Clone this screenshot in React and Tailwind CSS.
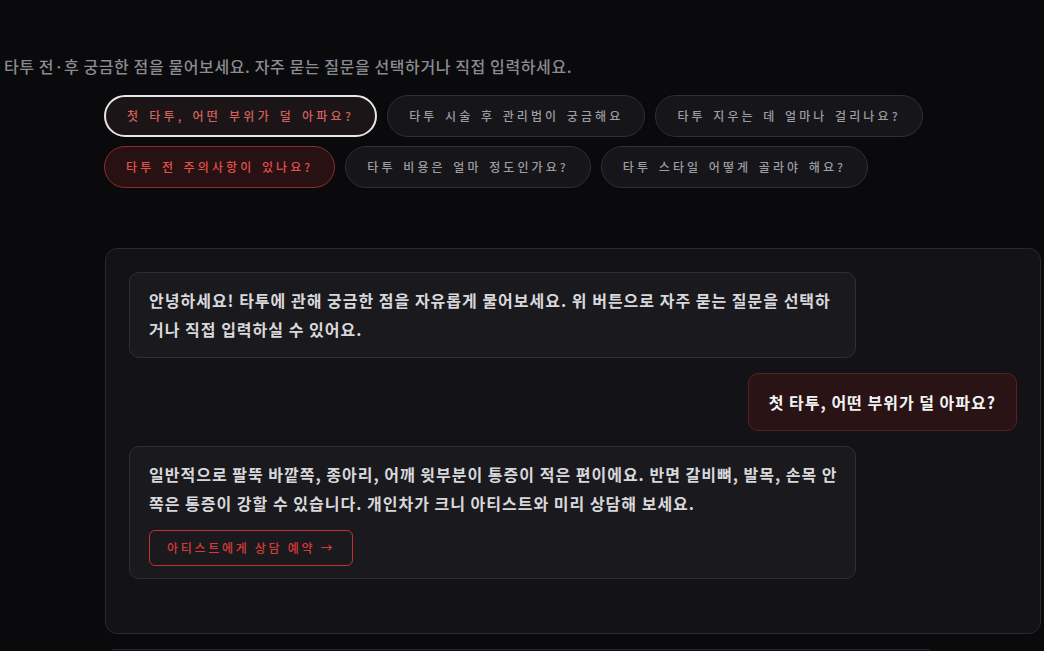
import React from "react";

const chips = [
  { t: "첫 타투, 어떤 부위가 덜 아파요?", k: "sel" },
  { t: "타투 시술 후 관리법이 궁금해요", k: "n" },
  { t: "타투 지우는 데 얼마나 걸리나요?", k: "n" },
  { t: "타투 전 주의사항이 있나요?", k: "act" },
  { t: "타투 비용은 얼마 정도인가요?", k: "n" },
  { t: "타투 스타일 어떻게 골라야 해요?", k: "n" },
];

const chipCls = {
  n: "border border-[#2f2f34] bg-[#16161a] text-[#9c9ca2] tracking-[3.1px]",
  sel: "border-2 border-[#e6e6e6] bg-[#1b1517] text-[#d2625c] tracking-[3.3px]",
  act: "border border-[#8e2b2b] bg-[#281113] text-[#e0524d] tracking-[3.1px]",
};

export default function App() {
  return (
    <div
      className="min-h-screen bg-[#0a0a0d] overflow-hidden"
      style={{ fontFamily: '"Noto Sans CJK KR", "Noto Sans", sans-serif' }}
    >
      <p className="pt-[54px] pl-1 text-[16px] leading-6 font-medium tracking-[0.6px] text-[#8b8b90]">
        타투 전·후 궁금한 점을 물어보세요. 자주 묻는 질문을 선택하거나 직접 입력하세요.
      </p>

      <div className="ml-[104px] mr-1 mt-[17px] flex flex-wrap gap-x-[10px] gap-y-[9px]">
        {chips.map((c) => (
          <button
            key={c.t}
            className={`h-[42px] rounded-full px-[21px] text-[12px] font-medium [word-spacing:1.8px] whitespace-nowrap flex items-center ${chipCls[c.k]}`}
          >
            {c.t}
          </button>
        ))}
      </div>

      <div className="ml-[105px] mr-[3px] mt-[60px] h-[386px] rounded-xl border border-[#29292e] bg-[#131317] p-[23px] flex flex-col gap-[15px]">
        <div className="self-start max-w-[727px] rounded-[10px] border border-[#2e2e33] bg-[#1a1a1e] px-[19px] py-[13px] text-[16px] leading-[29px] font-semibold tracking-[1px] text-[#d8d8dc]">
          안녕하세요! 타투에 관해 궁금한 점을 자유롭게 물어보세요. 위 버튼으로 자주 묻는 질문을 선택하거나 직접 입력하실 수 있어요.
        </div>

        <div className="self-end h-[58px] flex items-center rounded-[10px] border border-[#5c1f21] bg-[#2a1315] px-5 text-[16px] leading-[29px] font-bold tracking-[1px] text-[#f2f2f2]">
          첫 타투, 어떤 부위가 덜 아파요?
        </div>

        <div className="self-start max-w-[727px] rounded-[10px] border border-[#2e2e33] bg-[#1a1a1e] pl-[19px] pr-[14px] pt-[13px] pb-[12px] text-[16px] leading-[29px] font-semibold tracking-[1px] text-[#d8d8dc]">
          <p>
            일반적으로 팔뚝 바깥쪽, 종아리, 어깨 윗부분이 통증이 적은 편이에요. 반면 갈비뼈, 발목, 손목 안쪽은 통증이 강할 수 있습니다. 개인차가 크니 아티스트와 미리 상담해 보세요.
          </p>
          <button className="mt-3 h-[36px] rounded-md border-[1.5px] border-[#c4302f] px-[17px] text-[12px] leading-none font-medium tracking-[2.7px] text-[#d83a36] flex items-center">
            아티스트에게 상담 예약 →
          </button>
        </div>
      </div>

      <div className="ml-[112px] mt-[15px] w-[818px] h-4 border-t border-[#26262b] bg-[#0e0e12]" />
    </div>
  );
}
